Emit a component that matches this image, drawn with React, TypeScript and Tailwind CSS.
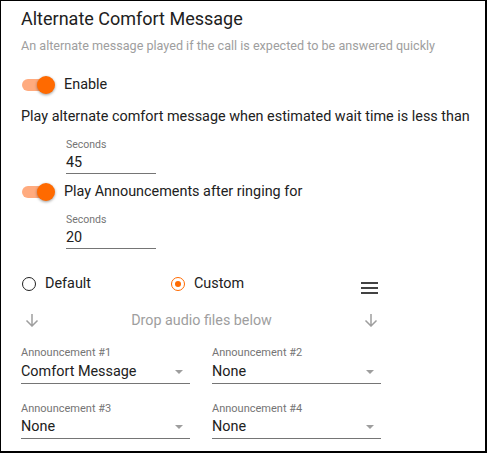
import { useState } from "react";

type SelectFieldProps = {
  label: string;
  value: string;
};

function Toggle({ on }: { on: boolean }) {
  return (
    <div className="relative h-[20px] w-[34px] shrink-0">
      <div
        className={`absolute left-0 top-[4px] h-[12px] w-[30px] rounded-full ${
          on ? "bg-[#ffab7f]" : "bg-[#bdbdbd]"
        }`}
      />
      <div
        className={`absolute top-[1px] h-[18px] w-[18px] rounded-full shadow-[0_1px_3px_rgba(0,0,0,0.4)] ${
          on ? "left-[15px] bg-[#ff6a00]" : "left-0 bg-[#fafafa]"
        }`}
      />
    </div>
  );
}

function SecondsField({ value }: { value: string }) {
  return (
    <div className="ml-[45px] w-[90px]">
      <div className="text-[10.5px] leading-[13px] text-[#757575]">Seconds</div>
      <div className="mt-[3.5px] border-b border-[#757575] pb-[1px] text-[14.4px] leading-[18px] text-[#212121]">
        {value}
      </div>
    </div>
  );
}

function SelectField({ label, value }: SelectFieldProps) {
  return (
    <div className="w-[169px]">
      <div className="text-[11px] leading-[13px] text-[#757575]">{label}</div>
      <div className="mt-[3.5px] flex items-center justify-between border-b border-[#757575] pb-[2px]">
        <span className="text-[14.4px] leading-[18px] text-[#212121]">{value}</span>
        <span className="mr-[7px] h-0 w-0 border-x-[4px] border-t-[4px] border-x-transparent border-t-[#9e9e9e]" />
      </div>
    </div>
  );
}

function ArrowDown() {
  return (
    <svg width="14" height="14" viewBox="0 0 14 14" fill="none" stroke="#9e9e9e" strokeWidth="1.5">
      <path d="M7 1v12M1.5 7.5L7 13l5.5-5.5" />
    </svg>
  );
}

function RadioDot({ checked }: { checked: boolean }) {
  return (
    <span
      className={`flex h-[14px] w-[14px] shrink-0 items-center justify-center rounded-full border-[1.5px] ${
        checked ? "border-[#ff6a00]" : "border-[#212121]"
      }`}
    >
      {checked && <span className="h-[6px] w-[6px] rounded-full bg-[#ff6a00]" />}
    </span>
  );
}

export default function App() {
  const [mode, setMode] = useState<"default" | "custom">("custom");

  return (
    <div className="h-[453px] w-[487px] overflow-hidden border-t border-l border-r-2 border-b-2 border-black bg-white font-['Roboto',sans-serif] text-[#212121]">
      <div className="pl-[20px] pt-[6px]">
        <h1 className="text-[18px] leading-[24px] text-[#212121]">Alternate Comfort Message</h1>
        <p className="mt-[7px] text-[12.6px] leading-[16px] text-[#9e9e9e]">
          An alternate message played if the call is expected to be answered quickly
        </p>

        <div className="mt-[21px] flex items-center gap-[8px] pl-[1px]">
          <Toggle on />
          <span className="text-[14.4px] leading-[18px]">Enable</span>
        </div>

        <p className="mt-[13px] text-[14.4px] leading-[18px]">
          Play alternate comfort message when estimated wait time is less than
        </p>

        <div className="mt-[11.5px]">
          <SecondsField value="45" />
        </div>

        <div className="mt-[8px] flex items-center gap-[8px] pl-[1px]">
          <Toggle on />
          <span className="text-[14.4px] leading-[18px]">Play Announcements after ringing for</span>
        </div>

        <div className="mt-[10.5px]">
          <SecondsField value="20" />
        </div>

        <div className="mt-[25px] flex items-center">
          <button
            className="flex w-[150px] items-center gap-[9px] pl-[1px]"
            onClick={() => setMode("default")}
          >
            <RadioDot checked={mode === "default"} />
            <span className="text-[14.4px] leading-[18px]">Default</span>
          </button>
          <button className="flex w-[190px] items-center gap-[9px]" onClick={() => setMode("custom")}>
            <RadioDot checked={mode === "custom"} />
            <span className="text-[14.4px] leading-[18px]">Custom</span>
          </button>
          <svg className="mt-[8px]" width="17" height="12" viewBox="0 0 17 12" fill="#424242">
            <rect x="0" y="0" width="17" height="2" />
            <rect x="0" y="5" width="17" height="2" />
            <rect x="0" y="10" width="17" height="2" />
          </svg>
        </div>

        <div className="mt-[18px] flex h-[16px] w-[357px] items-center justify-between pl-[4px]">
          <ArrowDown />
          <span className="text-[14.3px] leading-[16px] text-[#9e9e9e]">Drop audio files below</span>
          <ArrowDown />
        </div>

        <div className="mt-[18px] grid w-[360px] grid-cols-2 gap-x-[22px] gap-y-[18px]">
          <SelectField label="Announcement #1" value="Comfort Message" />
          <SelectField label="Announcement #2" value="None" />
          <SelectField label="Announcement #3" value="None" />
          <SelectField label="Announcement #4" value="None" />
        </div>
      </div>
    </div>
  );
}
